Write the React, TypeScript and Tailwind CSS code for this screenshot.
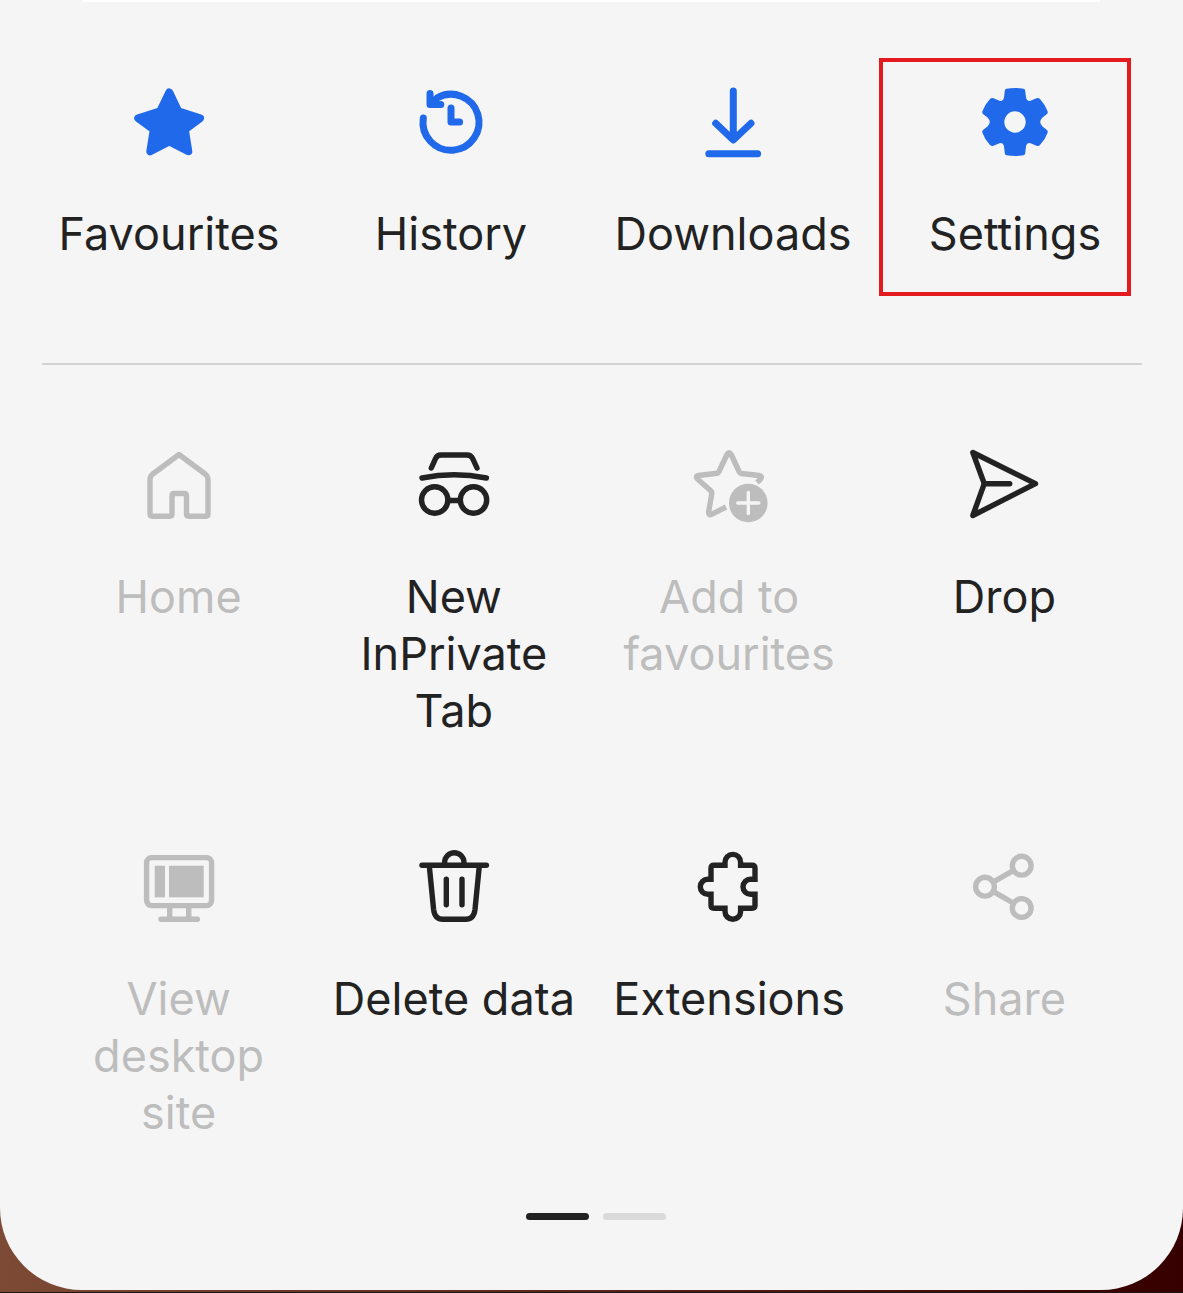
import type { ReactNode } from "react";
import clsx from "clsx";

type MenuItem = {
  label: string;
  icon: ReactNode;
  disabled?: boolean;
  highlighted?: boolean;
};

function Icon({ width, children }: { width: number; children: ReactNode }) {
  return (
    <svg
      viewBox="0 0 80 80"
      className="size-20 shrink-0"
      fill="none"
      stroke="currentColor"
      strokeWidth={width}
      strokeLinecap="round"
      strokeLinejoin="round"
      aria-hidden="true"
    >
      {children}
    </svg>
  );
}

const quickActions: MenuItem[] = [
  {
    label: "Favourites",
    icon: (
      <Icon width={8}>
        <path
          d="M40.3 10.5L49.2 29.2L71 36.2L55.8 47.5L59.3 69.3L40.3 59.5L21.3 69.3L24.8 47.5L9.3 36.2L31.2 29.2Z"
          fill="currentColor"
        />
      </Icon>
    ),
  },
  {
    label: "History",
    icon: (
      <Icon width={7}>
        <path d="M12.3 36A28 28 0 1 0 26 16L20 21.5" />
        <path d="M19 11.5V22.5H29.8" />
        <path d="M40 26V40H48.6" />
      </Icon>
    ),
  },
  {
    label: "Downloads",
    icon: (
      <Icon width={7}>
        <path d="M40.3 9V57.5M22.7 41.3L40.3 58L58 41.3M15.8 71.7H64.6" />
      </Icon>
    ),
  },
  {
    label: "Settings",
    highlighted: true,
    icon: (
      <Icon width={0}>
        <path
          stroke="none"
          fill="currentColor"
          fillRule="evenodd"
          d="M31.5 6.8Q40 5.2 48.5 6.8Q50 7 50.2 8.8L51 15.5Q51.8 19.5 55.5 18.8L61.5 16.2Q63.5 15.5 65 17Q70.5 23 72.7 29.5Q73 31.3 71.7 32.3L67.5 35.5Q63 40 67.5 44.5L71.7 47.7Q73 48.7 72.7 50.5Q70.5 57 65 63Q63.5 64.5 61.5 63.8L55.5 61.2Q51.8 60.5 51 64.5L50.2 71.2Q50 73 48.5 73.2Q40 74.8 31.5 73.2Q30 73 29.8 71.2L29 64.5Q28.2 60.5 24.5 61.2L18.5 63.8Q16.5 64.5 15 63Q9.5 57 7.3 50.5Q7 48.7 8.3 47.7L12.5 44.5Q17 40 12.5 35.5L8.3 32.3Q7 31.3 7.3 29.5Q9.5 23 15 17Q16.5 15.5 18.5 16.2L24.5 18.8Q28.2 19.5 29 15.5L29.8 8.8Q30 7 31.5 6.8ZM40 29.3A10.7 10.7 0 1 0 40 50.7A10.7 10.7 0 1 0 40 29.3Z"
        />
      </Icon>
    ),
  },
];

const menuItems: MenuItem[] = [
  {
    label: "Home",
    disabled: true,
    icon: (
      <Icon width={5.4}>
        <path d="M40 9.5L13.8 29Q11 31.2 11 34.5V69Q11 71.2 13.2 71.2H30.8Q33 71.2 33 69V50.7Q33 48.5 35.2 48.5H45.3Q47.5 48.5 47.5 50.7V69Q47.5 71.2 49.7 71.2H66.8Q69 71.2 69 69V34.5Q69 31.2 66.2 29Z" />
      </Icon>
    ),
  },
  {
    label: "New InPrivate Tab",
    icon: (
      <Icon width={5.4}>
        <path d="M17.3 23L21.5 13.6Q23 10 27 10H53Q57 10 58.7 13.6L63 23" />
        <path d="M8 33Q40 26.5 72.4 33" />
        <circle cx="20.7" cy="55" r="13.2" />
        <circle cx="59.5" cy="55" r="13.2" />
        <path d="M34 55.5H46" />
      </Icon>
    ),
  },
  {
    label: "Add to favourites",
    disabled: true,
    icon: (
      <Icon width={5.4}>
        <path
          strokeLinecap="butt"
          d="M68 37.5L71.2 34.5Q74 31.2 70 30.5L52.4 28.5Q51 28.3 50.3 27L42.2 9.5Q40 6 38 9.5L30 26.5Q29.3 28 28 28.3L9.5 30.5Q6 31 8.5 34L21.5 45.5Q23 47 22.8 48.5L19.7 66.5Q19.2 71.2 23 69.2L37 62"
        />
        <circle cx="59.3" cy="58" r="19.3" fill="currentColor" stroke="none" />
        <path d="M59.3 47.5V68.5M48.8 58H69.8" stroke="#f5f5f5" strokeWidth="3.4" />
      </Icon>
    ),
  },
  {
    label: "Drop",
    icon: (
      <Icon width={5.4}>
        <path d="M8.8 7.5L71.5 38.7L8.8 70.5L20.3 38.7Z" />
        <path d="M20.3 38.7H45.7" />
      </Icon>
    ),
  },
  {
    label: "View desktop site",
    disabled: true,
    icon: (
      <Icon width={5.4}>
        <rect x="7.6" y="10.6" width="65" height="48" rx="5" />
        <rect x="15.7" y="18.7" width="10.3" height="31.6" fill="currentColor" stroke="none" />
        <rect x="30" y="18.7" width="34.7" height="31.6" fill="currentColor" stroke="none" />
        <path d="M30.7 60V72M49.7 60V72M22 72.3H58.4" />
      </Icon>
    ),
  },
  {
    label: "Delete data",
    icon: (
      <Icon width={5.4}>
        <path d="M8 18.3H72.4" />
        <path d="M30.6 17V15.4A9.7 9.7 0 0 1 50 15.4V17" />
        <path d="M15.3 19L19.6 62.5Q20.8 72.3 29 72.3H51.5Q59.8 72.3 61 62.5L65.3 19" />
        <path d="M32.3 32.3V57.8M48 32.3V57.8" />
      </Icon>
    ),
  },
  {
    label: "Extensions",
    icon: (
      <Icon width={5.4}>
        <path
          strokeLinecap="butt"
          strokeLinejoin="miter"
          d="M36 18.3V15.2A7.8 7.8 0 0 1 51.6 15.2V18.3H63Q66 18.3 66 21.3V32.3H61.5A7.5 7.5 0 0 0 61.5 47.3H66V58.3Q66 61.3 63 61.3H51.6V64.5A7.8 7.8 0 0 1 36 64.5V61.3H25Q22 61.3 22 58.3V47.3H18.8A7.5 7.5 0 0 1 18.8 32.3H22V21.3Q22 18.3 25 18.3Z"
        />
      </Icon>
    ),
  },
  {
    label: "Share",
    disabled: true,
    icon: (
      <Icon width={5.4}>
        <circle cx="21" cy="39.7" r="9.4" />
        <circle cx="57.7" cy="18.7" r="9.4" />
        <circle cx="57.7" cy="61" r="9.4" />
        <path d="M29.5 34.8L49.2 23.6M29.5 44.6L49.2 56" />
      </Icon>
    ),
  },
];

function MenuButton({ item, accent }: { item: MenuItem; accent?: boolean }) {
  return (
    <button
      type="button"
      disabled={item.disabled}
      className={clsx(
        "relative flex w-full flex-col items-center gap-[43px] px-3",
        item.disabled ? "text-[#bdbdbd]" : "text-[#222222]"
      )}
    >
      <span className={clsx(accent && "text-[#2169eb]")}>{item.icon}</span>
      <span className="text-center text-[45px] leading-[57px]">{item.label}</span>
      {item.highlighted && (
        <span className="absolute -top-6 -bottom-[34px] left-[5px] right-[25px] border-4 border-[#e31b1f]" />
      )}
    </button>
  );
}

export default function App() {
  return (
    <div className="border-b border-[#1c1418] bg-linear-to-r from-[#7d4a36] to-[#360000] pb-0.5 font-['Inter','Liberation_Sans',sans-serif] font-normal">
      <main className="rounded-b-[82px] bg-[#f5f5f5] pb-[70px]">
        {/* Bottom edge of the card above */}
        <div className="mx-[83px] h-0.5 bg-white" />

        <ul className="grid grid-cols-4 pl-7 pr-[27px] pt-20">
          {quickActions.map((item) => (
            <li key={item.label}>
              <MenuButton item={item} accent />
            </li>
          ))}
        </ul>

        <hr className="ml-[42px] mr-[41px] mt-[101px] border-t-2 border-[#d2d2d2]" />

        <ul className="grid grid-cols-4 gap-y-[108px] px-[41px] pt-20">
          {menuItems.map((item) => (
            <li key={item.label}>
              <MenuButton item={item} />
            </li>
          ))}
        </ul>

        {/* Page indicator */}
        <div className="mt-[72px] flex justify-center gap-3.5 pl-2">
          <span className="h-[7px] w-[63px] rounded-full bg-[#222222]" />
          <span className="h-[7px] w-[63px] rounded-full bg-[#dadada]" />
        </div>
      </main>
    </div>
  );
}
